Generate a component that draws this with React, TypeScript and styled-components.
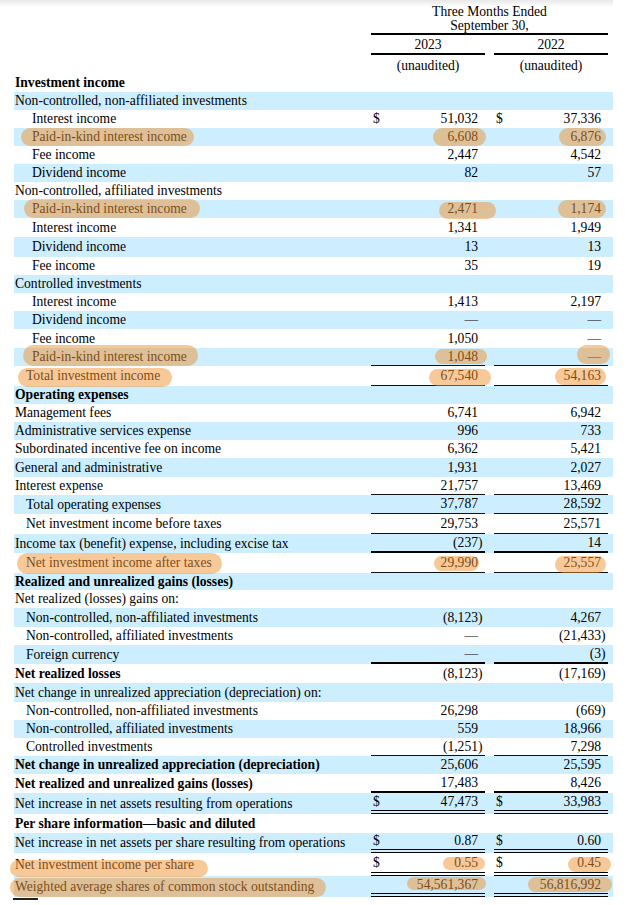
import React from 'react';
import styled, { createGlobalStyle, css } from 'styled-components';

const GlobalStyle = createGlobalStyle`
  html, body { margin: 0; padding: 0; background: #fff; }
  body {
    font-family: "Liberation Serif", "Times New Roman", serif;
    font-size: 13.6px;
    color: #000;
  }
`;

const COLS = '357px 114px 9px 114px 5px';
const BAND = '#cceeff';
const MARK = 'rgba(240, 145, 50, 0.5)';

type Rule = 'thin' | 'thick' | 'double';
type Ext = [number, number, number, number]; // left, right, top, bottom extension
interface Amt { v: string; d?: boolean; hl?: Ext }
interface Line {
  label: string;
  h: number;
  ind?: 0 | 1 | 2;
  bold?: boolean;
  a?: Amt;
  b?: Amt;
  rule?: Rule;
  hl?: Ext;
}

const rows: Line[] = [
  { label: 'Investment income', h: 18, bold: true },
  { label: 'Non-controlled, non-affiliated investments', h: 18 },
  { label: 'Interest income', h: 18, ind: 2, a: { v: '51,032', d: true }, b: { v: '37,336', d: true } },
  { label: 'Paid-in-kind interest income', h: 18, ind: 2, hl: [11, 7, 0, 0], a: { v: '6,608', hl: [14, 8, 0, 0] }, b: { v: '6,876', hl: [11, 5, 0, 0] } },
  { label: 'Fee income', h: 18, ind: 2, a: { v: '2,447' }, b: { v: '4,542' } },
  { label: 'Dividend income', h: 18, ind: 2, a: { v: '82' }, b: { v: '57' } },
  { label: 'Non-controlled, affiliated investments', h: 18 },
  { label: 'Paid-in-kind interest income', h: 18, ind: 2, hl: [8, 13, 1, 0], a: { v: '2,471', hl: [8, 18, -2, 1] }, b: { v: '1,174', hl: [12, 5, 0, 0] } },
  { label: 'Interest income', h: 19, ind: 2, a: { v: '1,341' }, b: { v: '1,949' } },
  { label: 'Dividend income', h: 20, ind: 2, a: { v: '13' }, b: { v: '13' } },
  { label: 'Fee income', h: 18, ind: 2, a: { v: '35' }, b: { v: '19' } },
  { label: 'Controlled investments', h: 18 },
  { label: 'Interest income', h: 18, ind: 2, a: { v: '1,413' }, b: { v: '2,197' } },
  { label: 'Dividend income', h: 18, ind: 2, a: { v: '—' }, b: { v: '—' } },
  { label: 'Fee income', h: 19, ind: 2, a: { v: '1,050' }, b: { v: '—' } },
  { label: 'Paid-in-kind interest income', h: 18, ind: 2, hl: [9, 11, 3, 0], rule: 'thin', a: { v: '1,048', hl: [12, 9, -1, -1] }, b: { v: '—', hl: [10, 9, 3, -1] } },
  { label: 'Total investment income', h: 20, ind: 1, hl: [8, 12, -2, 1], rule: 'thin', a: { v: '67,540', hl: [12, 13, -3, 1] }, b: { v: '54,163', hl: [9, 5, -2, 0] } },
  { label: 'Operating expenses', h: 18, bold: true },
  { label: 'Management fees', h: 18, a: { v: '6,741' }, b: { v: '6,942' } },
  { label: 'Administrative services expense', h: 18, a: { v: '996' }, b: { v: '733' } },
  { label: 'Subordinated incentive fee on income', h: 18, a: { v: '6,362' }, b: { v: '5,421' } },
  { label: 'General and administrative', h: 19, a: { v: '1,931' }, b: { v: '2,027' } },
  { label: 'Interest expense', h: 18, rule: 'thin', a: { v: '21,757' }, b: { v: '13,469' } },
  { label: 'Total operating expenses', h: 19, ind: 1, rule: 'thin', a: { v: '37,787' }, b: { v: '28,592' } },
  { label: 'Net investment income before taxes', h: 20, ind: 1, rule: 'thin', a: { v: '29,753' }, b: { v: '25,571' } },
  { label: 'Income tax (benefit) expense, including excise tax', h: 19, rule: 'thick', a: { v: '(237)' }, b: { v: '14' } },
  { label: 'Net investment income after taxes', h: 20, ind: 1, hl: [9, 10, 0, 1], rule: 'thin', a: { v: '29,990', hl: [7, 1, -3, -1] }, b: { v: '25,557', hl: [9, 5, -3, 1] } },
  { label: 'Realized and unrealized gains (losses)', h: 17, bold: true },
  { label: 'Net realized (losses) gains on:', h: 18 },
  { label: 'Non-controlled, non-affiliated investments', h: 19, ind: 1, a: { v: '(8,123)' }, b: { v: '4,267' } },
  { label: 'Non-controlled, affiliated investments', h: 18, ind: 1, a: { v: '—' }, b: { v: '(21,433)' } },
  { label: 'Foreign currency', h: 19, ind: 1, rule: 'thick', a: { v: '—' }, b: { v: '(3)' } },
  { label: 'Net realized losses', h: 19, bold: true, a: { v: '(8,123)' }, b: { v: '(17,169)' } },
  { label: 'Net change in unrealized appreciation (depreciation) on:', h: 19 },
  { label: 'Non-controlled, non-affiliated investments', h: 18, ind: 1, a: { v: '26,298' }, b: { v: '(669)' } },
  { label: 'Non-controlled, affiliated investments', h: 18, ind: 1, a: { v: '559' }, b: { v: '18,966' } },
  { label: 'Controlled investments', h: 18, ind: 1, rule: 'thin', a: { v: '(1,251)' }, b: { v: '7,298' } },
  { label: 'Net change in unrealized appreciation (depreciation)', h: 18, bold: true, a: { v: '25,606' }, b: { v: '25,595' } },
  { label: 'Net realized and unrealized gains (losses)', h: 19, bold: true, rule: 'thick', a: { v: '17,483' }, b: { v: '8,426' } },
  { label: 'Net increase in net assets resulting from operations', h: 21, rule: 'double', a: { v: '47,473', d: true }, b: { v: '33,983', d: true } },
  { label: 'Per share information—basic and diluted', h: 19, bold: true },
  { label: 'Net increase in net assets per share resulting from operations', h: 20, rule: 'double', a: { v: '0.87', d: true }, b: { v: '0.60', d: true } },
  { label: 'Net investment income per share', h: 23, hl: [5, 14, -7, 1], rule: 'double', a: { v: '0.55', d: true, hl: [11, 7, -4, -2] }, b: { v: '0.45', d: true, hl: [9, 10, -4, 0] } },
  { label: 'Weighted average shares of common stock outstanding', h: 21, hl: [5, 12, -2, 0], rule: 'double', a: { v: '54,561,367', hl: [10, 8, -1, -3] }, b: { v: '56,816,992', hl: [12, 11, -1, -1] } },
];

const Page = styled.div`
  width: 613px;
  padding-left: 14px;
  box-sizing: border-box;
  background: linear-gradient(to bottom, #e8e8e8 0, #ffffff 7px) no-repeat;
`;

const HeadGrid = styled.div`
  display: grid;
  grid-template-columns: ${COLS};
  padding-top: 5px;
`;

const Period = styled.div`
  grid-column: 2 / 5;
  text-align: center;
  line-height: 13.6px;
  padding-bottom: 1px;
  border-bottom: 2px solid #000;
`;

const HeadCell = styled.div<{ $col: number; $h: number; $ruled?: boolean }>`
  grid-column: ${(p) => p.$col};
  height: ${(p) => p.$h}px;
  box-sizing: border-box;
  display: flex;
  align-items: center;
  justify-content: center;
  padding-top: 2px;
  ${(p) => p.$ruled && css`border-bottom: 2px solid #000;`}
`;

const Row = styled.div<{ $h: number; $band: boolean }>`
  display: grid;
  grid-template-columns: ${COLS};
  height: ${(p) => p.$h}px;
  background: ${(p) => (p.$band ? BAND : 'transparent')};
`;

const indentPx = [1, 12, 18];

const Label = styled.div<{ $ind: number; $bold?: boolean }>`
  display: flex;
  align-items: center;
  padding-left: ${(p) => indentPx[p.$ind]}px;
  font-weight: ${(p) => (p.$bold ? 700 : 400)};
  white-space: nowrap;
`;

const ruleCss: Record<Rule, ReturnType<typeof css>> = {
  thin: css`border-bottom: 1px solid #111;`,
  thick: css`border-bottom: 2px solid #000;`,
  double: css`border-bottom: 4px double #000;`,
};

const Amount = styled.div<{ $col: number; $rule?: Rule }>`
  grid-column: ${(p) => p.$col};
  display: flex;
  align-items: center;
  padding-left: 2px;
  box-sizing: border-box;
  white-space: nowrap;
  ${(p) => p.$rule && ruleCss[p.$rule]}
`;

const Dollar = styled.span`
  flex: none;
`;

const Figure = styled.span`
  flex: 1;
  align-self: stretch;
  display: flex;
  align-items: center;
  justify-content: flex-end;
`;

const Paren = styled.span`
  flex: none;
  width: 7px;
`;

const Mark = styled.span<{ $x: Ext }>`
  position: relative;
  align-self: stretch;
  display: flex;
  align-items: center;
  &::after {
    content: '';
    position: absolute;
    left: ${(p) => -p.$x[0]}px;
    right: ${(p) => -p.$x[1]}px;
    top: ${(p) => -p.$x[2]}px;
    bottom: ${(p) => -p.$x[3]}px;
    border-radius: 11px;
    background: ${MARK};
    pointer-events: none;
  }
`;

const FootRule = styled.div`
  width: 25px;
  height: 2px;
  margin-top: 1px;
  margin-left: -1px;
  background: #222;
`;

const Marked: React.FC<{ hl?: Ext; children: React.ReactNode }> = ({ hl, children }) =>
  hl ? <Mark $x={hl}>{children}</Mark> : <>{children}</>;

const AmountCell: React.FC<{ amt?: Amt; col: number; rule?: Rule }> = ({ amt, col, rule }) => {
  if (!amt) return <Amount $col={col} $rule={rule} />;
  const hasParen = amt.v.endsWith(')');
  const body = hasParen ? amt.v.slice(0, -1) : amt.v;
  return (
    <Amount $col={col} $rule={rule}>
      {amt.d && <Dollar>$</Dollar>}
      <Figure>
        <Marked hl={amt.hl}>{body}</Marked>
      </Figure>
      <Paren>{hasParen ? ')' : ''}</Paren>
    </Amount>
  );
};

export default function App() {
  return (
    <>
      <GlobalStyle />
      <Page>
        <HeadGrid>
          <Period>
            Three Months Ended
            <br />
            September 30,
          </Period>
          <HeadCell $col={2} $h={20} $ruled>2023</HeadCell>
          <HeadCell $col={4} $h={20} $ruled>2022</HeadCell>
          <HeadCell $col={2} $h={19}>(unaudited)</HeadCell>
          <HeadCell $col={4} $h={19}>(unaudited)</HeadCell>
        </HeadGrid>
        {rows.map((r, i) => (
          <Row key={i} $h={r.h} $band={i % 2 === 1}>
            <Label $ind={r.ind ?? 0} $bold={r.bold}>
              <Marked hl={r.hl}>{r.label}</Marked>
            </Label>
            <AmountCell amt={r.a} col={2} rule={r.rule} />
            <AmountCell amt={r.b} col={4} rule={r.rule} />
          </Row>
        ))}
        <FootRule />
      </Page>
    </>
  );
}
